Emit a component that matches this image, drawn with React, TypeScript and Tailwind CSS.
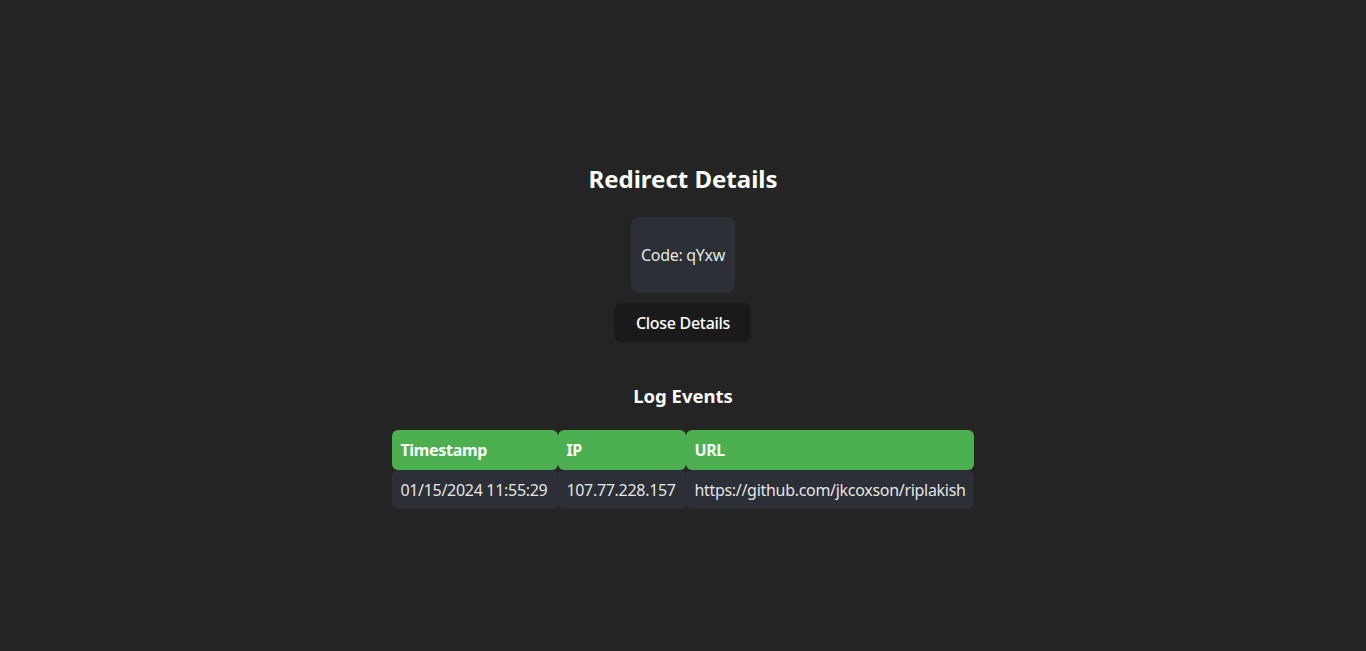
import React from 'react';

const events = [
  { timestamp: '01/15/2024 11:55:29', ip: '107.77.228.157', url: 'https://github.com/jkcoxson/riplakish' },
];

export default function App() {
  return (
    <div
      className="min-h-screen bg-[#242424] text-[rgba(255,255,255,0.9)] flex justify-center pt-[141px]"
      style={{ fontFamily: '"Noto Sans", "Open Sans", sans-serif' }}
    >
      <div className="flex flex-col items-center text-[16px] leading-[24px] tracking-[-0.3px]">
        <h2 className="text-[24px] leading-[36px] font-bold text-white mt-[20px] mb-[20px] tracking-normal">Redirect Details</h2>

        <div className="bg-[#2c3036] rounded-[8px] px-[10px] py-[26px] w-[104px] flex justify-center">
          <span className="whitespace-nowrap">Code: qYxw</span>
        </div>

        <button className="mt-[10px] bg-[#1a1a1a] rounded-[8px] w-[137px] h-[39px] font-medium text-white">
          Close Details
        </button>

        {/* events table */}
        <h3 className="mt-[40px] mb-[20px] text-[18.5px] leading-[28px] font-bold text-white tracking-normal">Log Events</h3>
        <table className="border-separate border-spacing-0">
          <thead>
            <tr>
              <th className="bg-[#4caf50] text-white text-left font-bold rounded-[6px] px-[8px] h-[40px] w-[166px]">Timestamp</th>
              <th className="bg-[#4caf50] text-white text-left font-bold rounded-[6px] px-[8px] h-[40px] w-[128px]">IP</th>
              <th className="bg-[#4caf50] text-white text-left font-bold rounded-[6px] px-[8px] h-[40px] w-[287px]">URL</th>
            </tr>
          </thead>
          <tbody>
            {events.map((e) => (
              <tr key={e.timestamp}>
                <td className="bg-[#2c3036] rounded-[6px] px-[8px] h-[39px] whitespace-nowrap">{e.timestamp}</td>
                <td className="bg-[#2c3036] rounded-[6px] px-[8px] h-[39px] whitespace-nowrap">{e.ip}</td>
                <td className="bg-[#2c3036] rounded-[6px] px-[8px] h-[39px] whitespace-nowrap">{e.url}</td>
              </tr>
            ))}
          </tbody>
        </table>
      </div>
    </div>
  );
}
